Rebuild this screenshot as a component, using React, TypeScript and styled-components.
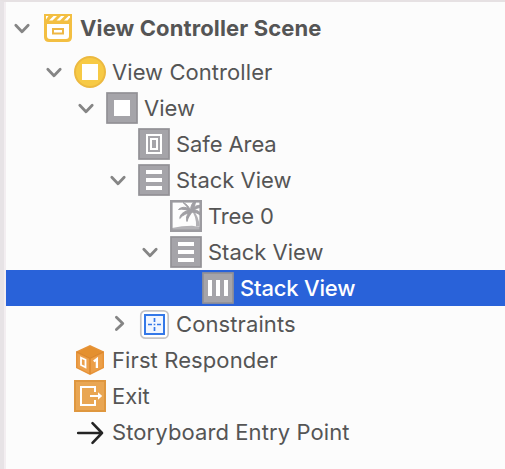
import React from "react";
import styled, { createGlobalStyle } from "styled-components";

const GlobalStyle = createGlobalStyle`
  * { box-sizing: border-box; }
  body { margin: 0; background: #fcfcfc; overflow: hidden; }
`;

const Panel = styled.div`
  width: 505px;
  height: 469px;
  border-top: 2px solid #e6e1e3;
  border-left: 4px solid #e7e3e6;
  background: #fcfcfc;
  font-family: Inter, "Liberation Sans", sans-serif;
  overflow: hidden;
`;

const Tree = styled.div`
  height: 100%;
  border-left: 2px solid #f3eef1;
`;

const Row = styled.div<{ $level: number; $selected?: boolean; $header?: boolean }>`
  display: flex;
  align-items: center;
  height: ${(p) => (p.$header ? 52 : 36)}px;
  padding-left: ${(p) => p.$level * 32}px;
  background: ${(p) => (p.$selected ? "#2962d9" : "transparent")};
  color: ${(p) => (p.$selected ? "#ffffff" : "#555555")};
`;

const Disclosure = styled.div`
  display: flex;
  flex: none;
  width: 36px;
  padding-left: 6px;
`;

const IconBox = styled.div`
  display: flex;
  flex: none;
  width: 32px;
  height: 32px;
`;

const Label = styled.span<{ $weight: number; $tracking: number }>`
  padding-left: 6px;
  font-size: 22px;
  line-height: 28px;
  white-space: pre;
  font-weight: ${(p) => p.$weight};
  letter-spacing: ${(p) => p.$tracking}px;
`;

const Chevron = ({ open }: { open: boolean }) => (
  <svg width="20" height="20" viewBox="0 0 20 20" fill="none" stroke="#858585" strokeWidth="2.8" strokeLinecap="round" strokeLinejoin="round">
    <path d={open ? "M3.8 7.3 10 13.7 16.2 7.3" : "M8.4 3.2 14.8 9.4 8.4 15.6"} />
  </svg>
);

const Svg = ({ children }: { children: React.ReactNode }) => (
  <svg width="32" height="32" viewBox="0 0 32 32" fill="none">{children}</svg>
);

const GrayTile = ({ children }: { children: React.ReactNode }) => (
  <Svg>
    <rect x="1" y="1" width="30" height="30" fill="#a5a4a9" stroke="#929196" strokeWidth="1.7" />
    {children}
  </Svg>
);

const SceneIcon = () => (
  <Svg>
    <path d="M2 2H30V25Q30 30 25 30H7Q2 30 2 25Z" fill="#f3bf42" />
    <path d="M4 4H6.5L4 7.5ZM11.5 4H15L10.5 8.5H7ZM19 4H22.5L18 8.5H14.5ZM26.5 4H28V5.5L25.5 8.5H22Z" fill="#fff" />
    <path d="M5 12H27V24Q27 27 24 27H8Q5 27 5 24Z" fill="#fff" />
    <rect x="11" y="17" width="10" height="4.5" stroke="#eeb744" strokeWidth="2" />
  </Svg>
);

const ControllerIcon = () => (
  <Svg>
    <circle cx="16" cy="16" r="15" fill="#f7ca45" stroke="#ecb940" strokeWidth="2" />
    <rect x="8" y="8" width="16" height="16" fill="#fff" />
  </Svg>
);

const ViewIcon = () => (
  <GrayTile><rect x="8" y="8" width="16" height="16" fill="#fff" /></GrayTile>
);

const SafeAreaIcon = () => (
  <GrayTile>
    <rect x="9" y="7" width="14" height="18" stroke="#fff" strokeWidth="2" />
    <rect x="13" y="11" width="6" height="10" stroke="#fff" strokeWidth="2" />
  </GrayTile>
);

const VerticalStackIcon = () => (
  <GrayTile><path d="M8 6H24V10H8ZM8 14H24V18H8ZM8 22H24V26H8Z" fill="#fff" /></GrayTile>
);

const HorizontalStackIcon = () => (
  <GrayTile><path d="M6 8H10V24H6ZM14 8H18V24H14ZM22 8H26V24H22Z" fill="#fff" /></GrayTile>
);

const ImageIcon = () => (
  <Svg>
    <rect x="2" y="2" width="28" height="28" fill="#fdfdfd" />
    <path d="M2 28Q12 25.8 22 25.8L30 27V30H2Z" fill="#b4b3b7" />
    <path d="M21 10Q26.5 16 26 26.5H29.5Q29 16 22.5 9.5Z" fill="#b2b1b5" />
    <path d="M21 10.5C17 7 12.5 6 8.5 9.5C13 8.5 17 10 21 11.5ZM21 10.5C15 10.5 10 13.5 9.8 18.5C13 14.5 17 13.5 21.5 12ZM21 11C17.5 13.5 15.5 17 17 21.5C18 17.5 20 15 22 12ZM20.5 11C19.5 7 16.5 3.8 13 2.5C16 5 18 8 19.5 11ZM20.5 11C20.5 7 21.5 4.5 23.5 2H25.5C25 5.5 23.5 8.5 22 11ZM21 10C24 6.5 27 5 30 5.5V7.5C27 8 24.5 9.5 22 11.5ZM21 10C25 9.5 28 10.5 30 12.5V15C27.5 13 25 12 21 12Z" fill="#a09fa4" stroke="#a09fa4" strokeWidth="1" />
    <rect x="1.3" y="1.3" width="29.4" height="29.4" stroke="#9c9ba0" strokeWidth="2.6" />
  </Svg>
);

const ConstraintsIcon = () => (
  <Svg>
    <rect x="2.8" y="2.8" width="27.4" height="27.4" rx="4.5" fill="#fff" stroke="#c5c4c6" strokeWidth="1.7" />
    <rect x="7" y="7" width="19" height="19" fill="#f1f6ff" stroke="#3478e8" strokeWidth="2" />
    <path d="M10 16.5H14M15.7 16.5H17.3M19 16.5H23M16.5 10V14M16.5 19V23" stroke="#3478e8" strokeWidth="1.7" />
  </Svg>
);

const ResponderIcon = () => (
  <Svg>
    <path d="M16 1 30 7.5V24L16 31 2 24V7.5Z" fill="#e79338" />
    <path d="M16 2.5 27.5 8 16 13.5 4.5 8Z" fill="#e4902f" />
    <path d="M3.5 9.5 15.2 15V29L3.5 23.2Z" fill="#eca04c" />
    <path d="M16.8 15 28.5 9.5V23.2L16.8 29Z" fill="#ec9f48" />
    <path d="M2.5 7.8 16 14.2 29.5 7.8M16 14.2V30" stroke="#d9862c" strokeWidth="1" />
    <path d="M7 13.7 11.5 15.8V23.2L7 21Z" stroke="#fff" strokeWidth="1.8" />
    <path d="M19.8 17.4 22.9 15V24" stroke="#fff" strokeWidth="2.3" />
  </Svg>
);

const ExitIcon = () => (
  <Svg>
    <rect x="1" y="1" width="30" height="30" fill="#e9a653" stroke="#df973f" strokeWidth="2" />
    <path d="M21 12V7H7V25H21V20M16 16H25" stroke="#fff" strokeWidth="2" />
    <path d="M24 12.2 28.2 16 24 19.8Z" fill="#fff" />
  </Svg>
);

const EntryIcon = () => (
  <Svg>
    <path d="M4.2 17H28M18.5 7.2 28 17 18.5 26.8" stroke="#242424" strokeWidth="2.6" strokeLinecap="round" strokeLinejoin="round" />
  </Svg>
);

type Item = {
  text: string;
  level: number;
  icon: React.ReactNode;
  open?: boolean;
  selected?: boolean;
  header?: boolean;
  tracking?: number;
};

const items: Item[] = [
  { text: "View Controller Scene", level: 0, icon: <SceneIcon />, open: true, header: true, tracking: 0.12 },
  { text: "View Controller", level: 1, icon: <ControllerIcon />, open: true, tracking: 0.06 },
  { text: "View", level: 2, icon: <ViewIcon />, open: true },
  { text: "Safe Area", level: 3, icon: <SafeAreaIcon />, tracking: -0.1 },
  { text: "Stack View", level: 3, icon: <VerticalStackIcon />, open: true },
  { text: "Tree 0", level: 4, icon: <ImageIcon />, tracking: -0.15 },
  { text: "Stack View", level: 4, icon: <VerticalStackIcon />, open: true },
  { text: "Stack View", level: 5, icon: <HorizontalStackIcon />, selected: true, tracking: -0.18 },
  { text: "Constraints", level: 3, icon: <ConstraintsIcon />, open: false, tracking: 0.1 },
  { text: "First Responder", level: 1, icon: <ResponderIcon />, tracking: 0.1 },
  { text: "Exit", level: 1, icon: <ExitIcon /> },
  { text: "Storyboard Entry Point", level: 1, icon: <EntryIcon />, tracking: 0.1 },
];

export default function App() {
  return (
    <>
      <GlobalStyle />
      <Panel>
        <Tree>
          {items.map((item, i) => (
            <Row key={i} $level={item.level} $selected={item.selected} $header={item.header}>
              <Disclosure>{item.open !== undefined && <Chevron open={item.open} />}</Disclosure>
              <IconBox>{item.icon}</IconBox>
              <Label $weight={item.header ? 700 : item.selected ? 550 : 400} $tracking={item.tracking ?? 0}>
                {item.text}
              </Label>
            </Row>
          ))}
        </Tree>
      </Panel>
    </>
  );
}
